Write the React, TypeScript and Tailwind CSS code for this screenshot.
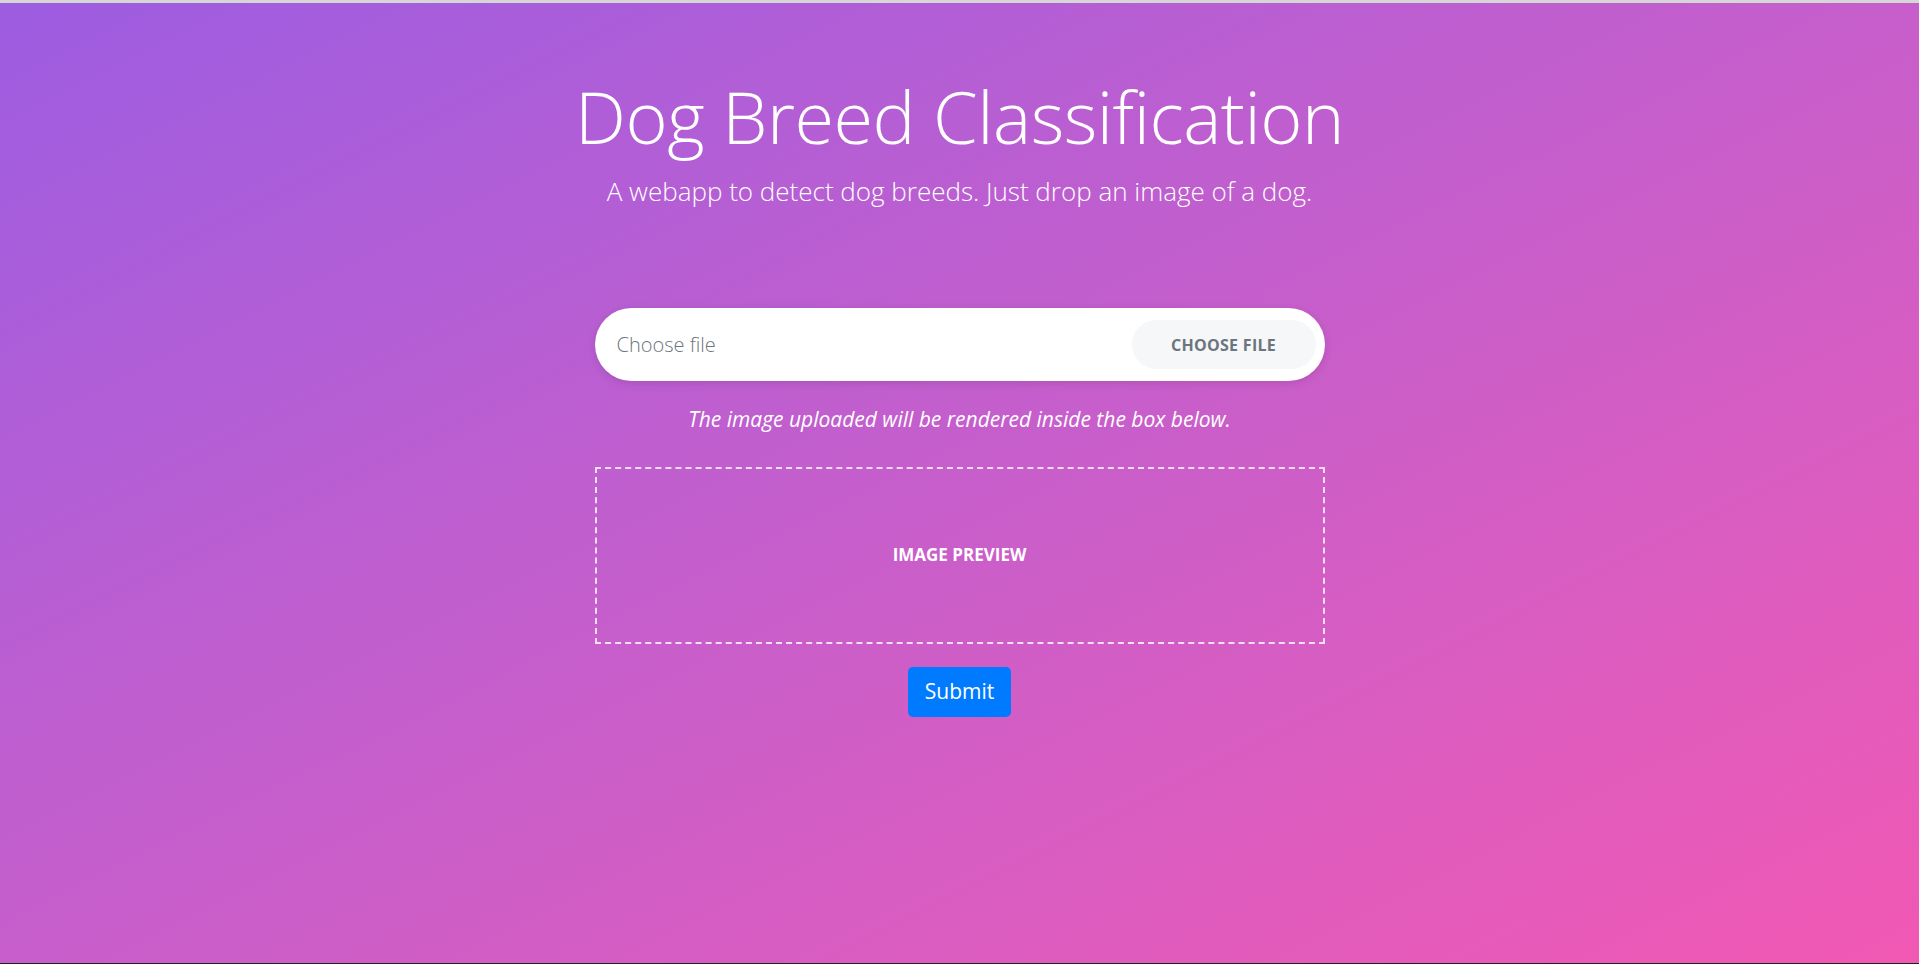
import React from "react";

export default function App() {
  return (
    <div className="w-[1919px] h-[964px] flex flex-col overflow-hidden" style={{ fontFamily: '"Open Sans", "Noto Sans", sans-serif' }}>
      <div className="h-[3px] bg-[#d6d6d6] shrink-0" />
      <div className="flex-1 bg-gradient-to-br from-[#9d5ce1] to-[#f158b3] flex flex-col items-center text-white">
        <h1 className="mt-[77px] text-[72px] leading-[1] font-light tracking-[-0.5px]">Dog Breed Classification</h1>
        <p className="mt-[24px] text-[26px] font-light leading-[1.2]">A webapp to detect dog breeds. Just drop an image of a dog.</p>

        <div className="mt-[101px] w-[730px] h-[73px] bg-white rounded-full shadow-[0_2px_8px_rgba(0,0,0,0.12)] flex items-center pl-[22px] pr-[9px]">
          <span className="flex-1 text-[20px] font-light text-[#6c757d]">Choose file</span>
          <div className="w-[184px] h-[49px] rounded-full bg-[#f6f7f9] flex items-center justify-center">
            <span className="text-[16px] font-bold text-[#6c757d] uppercase tracking-[0.3px]">Choose file</span>
          </div>
        </div>

        <p className="mt-[23px] text-[21px] italic font-normal">The image uploaded will be rendered inside the box below.</p>

        <div className="mt-[31px] w-[730px] h-[177px] border-2 border-dashed border-white/80 flex items-center justify-center">
          <span className="text-[17px] font-bold uppercase">Image preview</span>
        </div>

        <button className="mt-[23px] w-[103px] h-[50px] bg-[#007bff] rounded-[5px] text-[21px] text-white">Submit</button>
      </div>
      <div className="h-[1px] bg-[#222] shrink-0" />
    </div>
  );
}
